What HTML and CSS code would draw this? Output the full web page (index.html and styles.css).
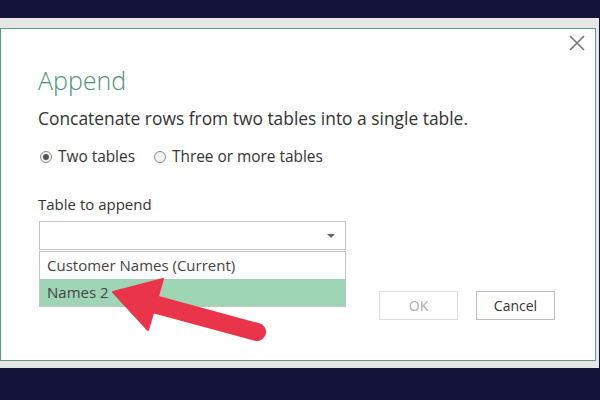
FILE: index.html
```html
<!DOCTYPE html>
<html lang="en">
<head>
    <meta charset="UTF-8">
    <title>Append</title>
    <link rel="stylesheet" href="styles.css">
</head>
<body>
    <div class="frame">
        <div class="dialog">
            <div class="dialog-header">
                <button class="close-button">
                    <svg viewBox="0 0 16 16">
                        <path d="M1 1L15 15M15 1L1 15"/>
                    </svg>
                </button>
            </div>

            <h1 class="title">Append</h1>
            <p class="description">Concatenate rows from two tables into a single table.</p>

            <div class="radio-group">
                <label class="radio-option">
                    <span class="radio checked"></span>
                    Two tables
                </label>
                <label class="radio-option">
                    <span class="radio"></span>
                    Three or more tables
                </label>
            </div>

            <p class="field-label">Table to append</p>
            <div class="select-wrapper">
                <div class="select">
                    <span class="select-arrow"></span>
                </div>
                <ul class="select-list">
                    <li class="select-item">Customer Names (Current)</li>
                    <li class="select-item selected">Names 2</li>
                </ul>
            </div>

            <div class="dialog-footer">
                <button class="button disabled">OK</button>
                <button class="button">Cancel</button>
            </div>

            <svg class="pointer-arrow" viewBox="0 0 600 400">
                <polygon points="113,292 163,279 148,330"/>
                <line x1="150" y1="303" x2="257" y2="332"/>
            </svg>
        </div>
    </div>
</body>
</html>
```

FILE: styles.css
```css
* {
    margin: 0;
    padding: 0;
    box-sizing: border-box;
}

body {
    font-family: 'Open Sans', 'Noto Sans', sans-serif;
    background: #14133a;
    width: 600px;
    height: 400px;
    padding-top: 18px;
    overflow: hidden;
    color: #333;
}

.frame {
    width: 599px;
    background: #e6e6e6;
    padding: 10px 3px 7px 0;
}

.dialog {
    height: 333px;
    background: #fff;
    border: 1px solid #5e9c7f;
    padding: 0 40px 0 37px;
    display: flex;
    flex-direction: column;
}

.dialog-header {
    display: flex;
    justify-content: flex-end;
    margin-right: -30px;
    padding-top: 6px;
    height: 26px;
}

.close-button {
    background: none;
    border: none;
    width: 17px;
    height: 17px;
    cursor: pointer;
}

.close-button svg {
    width: 16px;
    height: 16px;
    stroke: #777;
    stroke-width: 1.6;
}

.title {
    font-weight: 300;
    font-size: 25px;
    line-height: 34px;
    color: #4a9476;
    margin-top: 8px;
}

.description {
    font-size: 17.4px;
    line-height: 22px;
    margin-top: 10px;
}

.radio-group {
    display: flex;
    gap: 19px;
    margin-top: 18px;
    font-size: 15.4px;
    line-height: 20px;
}

.radio-option {
    display: flex;
    align-items: center;
    gap: 6px;
    margin-left: 2px;
}

.radio-option + .radio-option {
    margin-left: 0;
}

.radio {
    width: 12px;
    height: 12px;
    border-radius: 50%;
    border: 1px solid #8a8a8a;
    background: #f4f4f4;
    display: flex;
    align-items: center;
    justify-content: center;
}

.radio.checked::after {
    content: '';
    width: 6px;
    height: 6px;
    border-radius: 50%;
    background: #555;
}

.field-label {
    font-size: 15px;
    line-height: 20px;
    margin-top: 27px;
}

.select-wrapper {
    position: relative;
    width: 307px;
    margin-left: 1px;
    margin-top: 7px;
}

.select {
    height: 29px;
    border: 1px solid #c4c4c4;
    display: flex;
    align-items: center;
    justify-content: flex-end;
    padding-right: 10px;
}

.select-arrow {
    width: 0;
    height: 0;
    border-left: 4px solid transparent;
    border-right: 4px solid transparent;
    border-top: 4px solid #666;
}

.select-list {
    position: absolute;
    top: 30px;
    left: 0;
    width: 307px;
    list-style: none;
    background: #fff;
    border: 1px solid #c4c4c4;
    font-size: 15px;
    z-index: 1;
}

.select-item {
    height: 27px;
    line-height: 27px;
    padding-left: 7px;
    color: #444;
}

.select-item.selected {
    background: #9ed5b5;
}

.dialog-footer {
    display: flex;
    justify-content: flex-end;
    gap: 18px;
    margin-top: 41px;
}

.button {
    width: 79px;
    height: 29px;
    background: #fff;
    border: 1px solid #bdbdbd;
    font-family: 'Open Sans', 'Noto Sans', sans-serif;
    font-size: 14px;
    color: #333;
}

.button.disabled {
    border-color: #dedede;
    color: #aaa;
}

.pointer-arrow {
    position: absolute;
    top: 0;
    left: 0;
    width: 600px;
    height: 400px;
    z-index: 2;
    pointer-events: none;
}

.pointer-arrow polygon {
    fill: #e9344a;
    stroke: #e9344a;
    stroke-width: 2;
    stroke-linejoin: round;
}

.pointer-arrow line {
    stroke: #e9344a;
    stroke-width: 18;
    stroke-linecap: round;
}
```
